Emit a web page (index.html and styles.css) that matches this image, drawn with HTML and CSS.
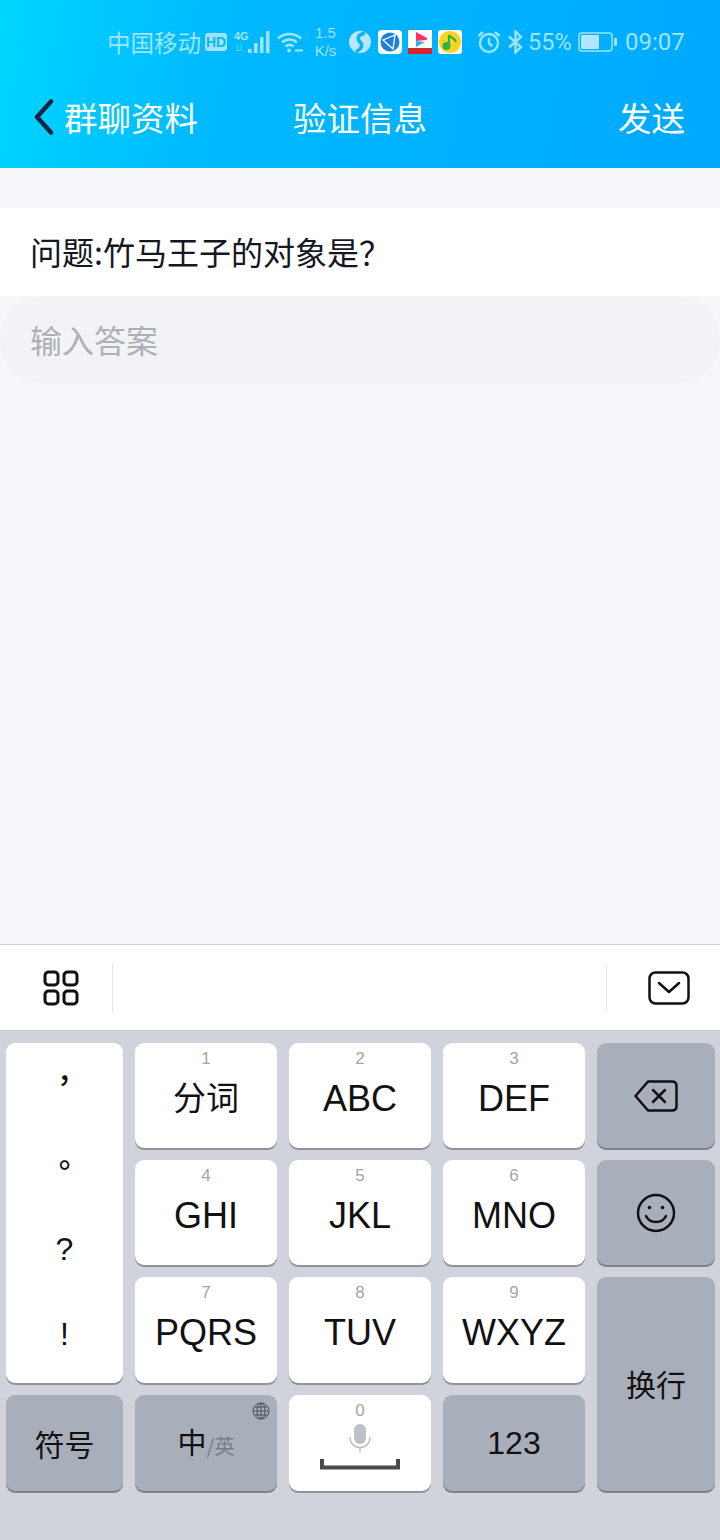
FILE: index.html
```html
<!DOCTYPE html>
<html lang="zh-CN">
<head>
    <meta charset="UTF-8">
    <meta name="viewport" content="width=device-width, initial-scale=1.0">
    <title>验证信息</title>
    <link rel="stylesheet" href="styles.css">
</head>
<body>
    <div class="screen">
        <header class="header">
            <div class="status">
                <span class="carrier">中国移动</span>
                <svg class="st-hd" width="22" height="18" viewBox="0 0 22 18"><rect width="22" height="18" rx="3" fill="#9fe4ff"/><text x="11" y="14" text-anchor="middle" class="hd-text">HD</text></svg>
                <svg class="st-signal" width="36" height="24" viewBox="0 0 36 24">
                    <text x="0" y="10" class="net-text">4G</text>
                    <text x="1" y="21" class="net-dim">1l</text>
                    <rect x="14" y="19" width="3.500" height="4" fill="#9fe4ff"/>
                    <rect x="20" y="13" width="3.500" height="10" fill="#9fe4ff"/>
                    <rect x="26" y="7" width="3.500" height="16" fill="#9fe4ff"/>
                    <rect x="32" y="1" width="3.500" height="22" fill="#9fe4ff"/>
                </svg>
                <svg class="st-wifi" width="26" height="22" viewBox="0 0 26 22" fill="none" stroke="#9fe4ff" stroke-width="2.500">
                    <path d="M1 7.500C7.500 1.500 17.500 1.500 24 7.500"/>
                    <path d="M5 11.500C9.500 7.500 15.500 7.500 20 11.500"/>
                    <path d="M8.500 15.500C11 13.500 14 13.500 16.500 15.500"/>
                    <circle cx="12" cy="19.500" r="2" fill="#9fe4ff" stroke="none"/>
                    <path d="M18 19.500h8" stroke-width="2"/>
                </svg>
                <div class="speed"><span>1.5</span><span>K/s</span></div>
                <svg class="st-ball" width="22" height="22" viewBox="0 0 22 22"><circle cx="11" cy="11" r="11" fill="#b5e8fb"/><path d="M16 2C8 4 8 8 11 11C14 14 13 18 7 20.500" fill="none" stroke="#0ab4f8" stroke-width="3.500"/></svg>
                <svg class="st-app" width="24" height="24" viewBox="0 0 24 24"><rect width="24" height="24" rx="4" fill="#fff"/><circle cx="12" cy="12" r="9.500" fill="#1d7fdc"/><path d="M5 10L17 5L15 19ZM5 10L15 19" fill="none" stroke="#fff" stroke-width="1.300"/></svg>
                <svg class="st-app2" width="24" height="24" viewBox="0 0 24 24"><rect width="24" height="24" fill="#fff"/><rect y="18" width="24" height="6" fill="#d8262f"/><path d="M8 2L19 8Q20 9 18 10L8 11Z" fill="#ff2f6d"/><path d="M8 11L17 12L8 17Z" fill="#22b5e8"/></svg>
                <svg class="st-app2" width="24" height="24" viewBox="0 0 24 24"><rect width="24" height="24" rx="3" fill="#fff"/><circle cx="12" cy="12" r="11" fill="#fbd41f"/><path d="M11 5V16" stroke="#2fb04a" stroke-width="2.200"/><path d="M11 5C13 8 17 8 18 12" fill="none" stroke="#2fb04a" stroke-width="2.200"/><circle cx="8.500" cy="16" r="4" fill="#2fb04a"/></svg>
                <svg class="st-alarm" width="24" height="24" viewBox="0 0 24 24" fill="none" stroke="#9fe4ff" stroke-width="2.400">
                    <circle cx="12" cy="13" r="9"/>
                    <path d="M12 8v5.500l3.500 2.500"/>
                    <path d="M1.500 6L6 2M22.500 6L18 2"/>
                </svg>
                <svg class="st-bt" width="15" height="24" viewBox="0 0 15 24" fill="none" stroke="#9fe4ff" stroke-width="2.400"><path d="M1 6.500L13 17L7.500 22.500V1.500L13 7L1 17.500"/></svg>
                <span class="pct">55%</span>
                <svg class="st-batt" width="39" height="20" viewBox="0 0 39 20"><rect x="1" y="1" width="33" height="18" rx="3" fill="none" stroke="#9fe4ff" stroke-width="1.500"/><rect x="3" y="3" width="18" height="14" rx="1" fill="#b5e6ff"/><rect x="36" y="6" width="3" height="8" rx="1" fill="#9fe4ff"/></svg>
                <span class="time">09:07</span>
            </div>
            <nav class="nav">
                <div class="nav-left">
                    <svg class="back" width="20" height="36" viewBox="0 0 20 36" fill="none" stroke="#0b2440" stroke-width="4.500" stroke-linecap="round" stroke-linejoin="round"><path d="M17 2.500L3 18L17 33.500"/></svg>
                    <span>群聊资料</span>
                </div>
                <div class="nav-title">验证信息</div>
                <div class="nav-right">发送</div>
            </nav>
        </header>

        <main class="content">
            <div class="question">问题:竹马王子的对象是<span class="qmark">？</span></div>
            <div class="answer">输入答案</div>
        </main>

        <div class="toolbar">
            <div class="tool-left">
                <svg width="36" height="36" viewBox="0 0 36 36" fill="none" stroke="#111" stroke-width="3">
                    <rect x="2" y="2" width="13" height="13" rx="3.500"/>
                    <rect x="21" y="2" width="13" height="13" rx="3.500"/>
                    <rect x="2" y="21" width="13" height="13" rx="3.500"/>
                    <rect x="21" y="21" width="13" height="13" rx="3.500"/>
                </svg>
            </div>
            <div class="tool-right">
                <svg width="42" height="34" viewBox="0 0 42 34" fill="none" stroke="#111" stroke-width="2.500" stroke-linecap="round" stroke-linejoin="round">
                    <rect x="1.500" y="1.500" width="39" height="31" rx="6"/>
                    <path d="M11 12L21 21L31 12"/>
                </svg>
            </div>
        </div>

        <div class="keyboard">
            <div class="key punct">
                <span class="cjk-mid">，</span>
                <span class="cjk-mid">。</span>
                <span>?</span>
                <span>!</span>
            </div>
            <div class="key"><small>1</small><b class="cn">分词</b></div>
            <div class="key"><small>2</small><b>ABC</b></div>
            <div class="key"><small>3</small><b>DEF</b></div>
            <div class="key dark icon-key">
                <svg width="44" height="32" viewBox="0 0 44 32" fill="none" stroke="#111" stroke-width="2.500" stroke-linejoin="round" stroke-linecap="round">
                    <path d="M14 1.500H38Q42.500 1.500 42.500 6V26Q42.500 30.500 38 30.500H14L1.500 16Z"/>
                    <path d="M19 10L31 22M31 10L19 22"/>
                </svg>
            </div>

            <div class="key"><small>4</small><b>GHI</b></div>
            <div class="key"><small>5</small><b>JKL</b></div>
            <div class="key"><small>6</small><b>MNO</b></div>
            <div class="key dark icon-key">
                <svg width="40" height="40" viewBox="0 0 40 40" fill="none" stroke="#111" stroke-width="2.500" stroke-linecap="round">
                    <circle cx="20" cy="20" r="18"/>
                    <path d="M10 23C14 31 26 31 30 23"/>
                    <circle cx="13.500" cy="14.500" r="1.800" fill="#111" stroke="none"/>
                    <circle cx="26.500" cy="14.500" r="1.800" fill="#111" stroke="none"/>
                </svg>
            </div>

            <div class="key"><small>7</small><b>PQRS</b></div>
            <div class="key"><small>8</small><b>TUV</b></div>
            <div class="key"><small>9</small><b>WXYZ</b></div>
            <div class="key dark enter">换行</div>

            <div class="key dark fn">符号</div>
            <div class="key dark lang">
                <svg class="globe" width="18" height="18" viewBox="0 0 18 18" fill="none" stroke="#4c525c" stroke-width="1">
                    <circle cx="9" cy="9" r="8"/>
                    <ellipse cx="9" cy="9" rx="4" ry="8"/>
                    <path d="M9 1V17M1 9H17M2.500 5H15.500M2.500 13H15.500"/>
                </svg>
                <span class="zh">中</span><span class="en">/英</span>
            </div>
            <div class="key space">
                <small>0</small>
                <svg class="mic" width="22" height="28" viewBox="0 0 22 28" fill="none" stroke="#bcc0c9" stroke-width="1.500">
                    <rect x="5" y="0" width="12" height="20" rx="6" fill="#bcc0c9" stroke="none"/>
                    <path d="M1 13C1 27 21 27 21 13M11 23V28"/>
                </svg>
                <svg class="bar" width="80" height="12" viewBox="0 0 80 12"><path d="M2 1V9.500H78V1" fill="none" stroke="#4a4a4a" stroke-width="4"/></svg>
            </div>
            <div class="key dark fn num">123</div>
        </div>
    </div>
</body>
</html>
```

FILE: styles.css
```css
* {
    box-sizing: border-box;
}
body {
    margin: 0;
    font-family: "Liberation Sans", "Noto Sans CJK SC", sans-serif;
    background-color: #f4f6fa;
}
.screen {
    width: 720px;
    height: 1540px;
    display: flex;
    flex-direction: column;
    overflow: hidden;
}

/* header */
.header {
    height: 168px;
    flex-shrink: 0;
    color: #fff;
    background: linear-gradient(100deg, #00d6ff 0%, #00b9ff 30%, #00a9ff 100%);
}
.status {
    height: 84px;
    display: flex;
    align-items: center;
    padding-left: 107px;
    color: #9fe4ff;
    font-family: Roboto, "Noto Sans CJK SC", sans-serif;
}
.carrier {
    width: 94px;
    font-size: 23.500px;
    white-space: nowrap;
    font-family: "Noto Sans CJK SC", sans-serif;
}
.hd-text {
    font: bold 14px "Liberation Sans", sans-serif;
    fill: #12b4f8;
}
.net-text {
    font: bold 11px "Liberation Sans", sans-serif;
    fill: #9fe4ff;
}
.net-dim {
    font: 9px "Liberation Sans", sans-serif;
    fill: #6fd2fb;
}
.st-hd {
    margin-left: 4px;
}
.st-signal {
    margin-left: 7px;
}
.st-wifi {
    margin-left: 7px;
}
.speed {
    width: 25px;
    margin-left: 10px;
    display: flex;
    flex-direction: column;
    align-items: center;
    font-size: 15px;
    line-height: 18px;
    font-family: "Liberation Sans", sans-serif;
}
.st-ball {
    margin-left: 11px;
}
.st-app {
    margin-left: 7px;
}
.st-app2 {
    margin-left: 6px;
}
.st-alarm {
    margin-left: 15px;
}
.st-bt {
    margin-left: 7px;
}
.pct {
    width: 42px;
    margin-left: 5px;
    font-size: 23.500px;
    white-space: nowrap;
}
.st-batt {
    margin-left: 8px;
}
.time {
    margin-left: 8px;
    font-size: 24px;
}
.nav {
    height: 66px;
    display: grid;
    grid-template-columns: 1fr auto 1fr;
    align-items: center;
    font-size: 33.500px;
    font-family: "Noto Sans CJK SC", sans-serif;
    line-height: 66px;
}
.nav-left {
    display: flex;
    align-items: center;
    padding-left: 34px;
    gap: 10px;
}
.nav-right {
    text-align: right;
    padding-right: 35px;
}

/* body */
.content {
    flex: 1;
    padding-top: 40px;
    font-family: "Noto Sans CJK SC", sans-serif;
    font-size: 32px;
}
.question {
    height: 88px;
    line-height: 87px;
    padding-left: 30px;
    color: #14171f;
    background-color: #fff;
}
.qmark {
    font-family: "Noto Sans CJK TC", sans-serif;
}
.answer {
    height: 88px;
    line-height: 87px;
    padding-left: 30px;
    color: #aeb0b5;
    background-color: #f2f3f7;
    border-radius: 44px;
}

/* toolbar above the keyboard */
.toolbar {
    height: 87px;
    flex-shrink: 0;
    display: flex;
    justify-content: space-between;
    align-items: center;
    background-color: #fff;
    border-top: 1px solid #cfd1d6;
    border-bottom: 1px solid #c4c6cc;
}
.toolbar svg {
    display: block;
}
.tool-left {
    width: 113px;
    height: 48px;
    display: flex;
    align-items: center;
    padding-left: 43px;
    border-right: 1px solid #e4e5e8;
}
.tool-right {
    width: 114px;
    height: 48px;
    display: flex;
    align-items: center;
    padding-left: 41px;
    border-left: 1px solid #e4e5e8;
}

/* keyboard */
.keyboard {
    height: 509px;
    flex-shrink: 0;
    display: grid;
    grid-template-columns: 117px 142px 142px 142px 118px;
    grid-template-rows: 105px 105px 106px 96px;
    gap: 12px 12px;
    padding: 12px 0 0 6px;
    background-color: #d0d3dc;
}
.key {
    display: flex;
    flex-direction: column;
    align-items: center;
    padding-top: 7px;
    color: #111;
    background-color: #fff;
    border-radius: 9px;
    box-shadow: 0 2px 0 #8f9298;
}
.key small {
    height: 18px;
    font-size: 17px;
    line-height: 18px;
    color: #a3a5aa;
}
.key b {
    margin-top: 9px;
    font-weight: normal;
    font-size: 36px;
    line-height: 44px;
}
.key b.cn {
    margin-top: 6px;
    font-size: 33px;
    font-family: "Noto Sans CJK SC", sans-serif;
}
.key.dark {
    background-color: #a8afbb;
    box-shadow: 0 2px 0 #7d828c;
}
.punct {
    grid-row: 1 / span 3;
    padding: 0;
    display: grid;
    grid-template-rows: repeat(4, 1fr);
    justify-items: center;
    align-items: center;
    font-size: 32px;
}
.punct span {
    margin-bottom: 12px;
}
.punct .cjk-mid {
    margin-bottom: 16px;
    font-family: "Noto Sans CJK TC", sans-serif;
    font-size: 30px;
    font-weight: 500;
}
.icon-key,
.enter,
.fn {
    padding: 0;
    justify-content: center;
}
.enter {
    grid-column: 5;
    grid-row: 3 / span 2;
    padding-bottom: 3px;
    font-size: 30px;
    font-family: "Noto Sans CJK SC", sans-serif;
}
.fn {
    font-size: 30px;
    font-family: "Noto Sans CJK SC", sans-serif;
}
.num {
    font-size: 32px;
    font-family: "Liberation Sans", sans-serif;
}
.lang {
    position: relative;
    padding: 0;
    flex-direction: row;
    justify-content: center;
    align-items: baseline;
    line-height: 92px;
    font-family: "Noto Sans CJK SC", sans-serif;
}
.globe {
    position: absolute;
    top: 7px;
    right: 7px;
}
.zh {
    font-size: 29px;
}
.en {
    font-size: 20px;
    color: #777c86;
}
.mic {
    display: block;
    margin-top: 4px;
}
.bar {
    display: block;
    margin-top: 6px;
}
```
